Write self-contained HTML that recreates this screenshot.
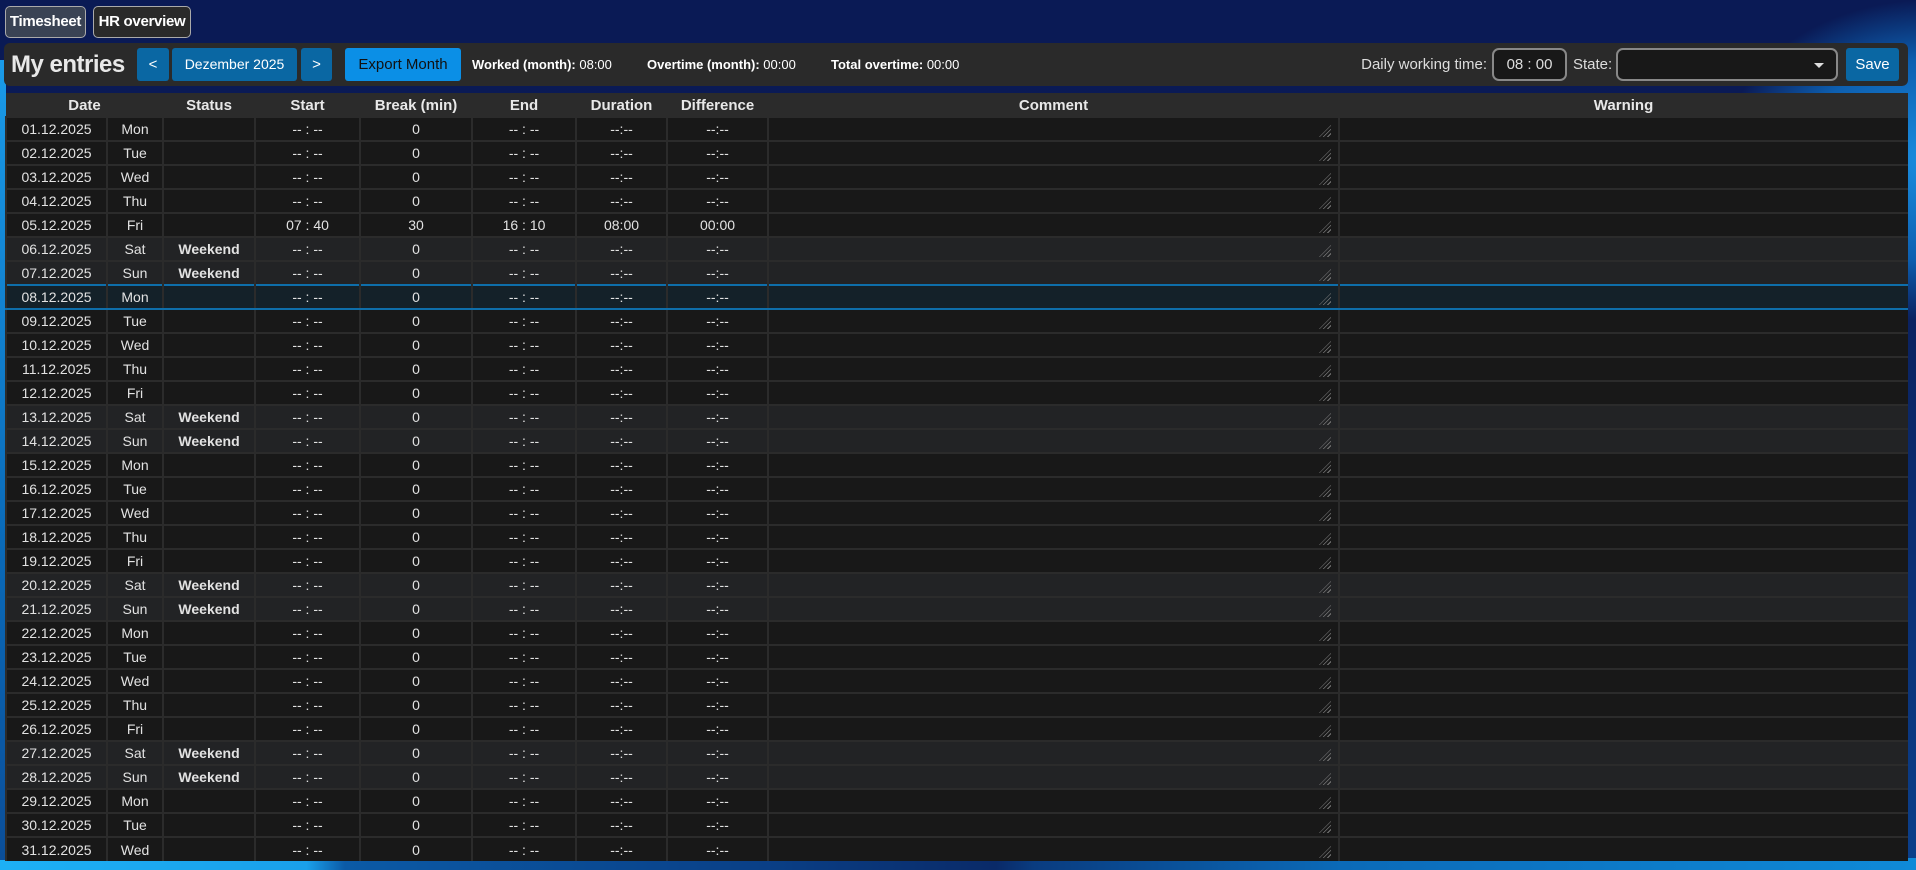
<!DOCTYPE html>
<html><head><meta charset="utf-8"><style>
*{box-sizing:border-box;margin:0;padding:0}
body{width:1916px;height:870px;overflow:hidden;position:relative;font-family:"Liberation Sans",sans-serif;color:#e6e6e6;
background:linear-gradient(90deg,#1db0f5 0,#1aa0ea 16%,#0b5aa6 18%,#0a3f86 40%,#0a2a68 52%,#0a3c80 54%,#0b6ab8 70%,#0f8ad8 100%);
}
.bgtop{position:absolute;left:0;top:0;width:1916px;height:858px;background:
radial-gradient(ellipse 260px 200px at 1930px 160px,#1a8ee0 0,#0d5fb0 50%,rgba(13,40,110,0) 80%),
linear-gradient(180deg,#0a1a55 0,#0b1a55 20%,#0b3f8a 100%);}
.bgleft{position:absolute;left:0;top:60px;width:6px;height:800px;background:linear-gradient(180deg,#1a9be8,#0a6ab8 60%,#0b4e98)}
.tab{position:absolute;top:6px;height:32px;border:1px solid #aaa;border-radius:5px;font-size:15px;font-weight:bold;color:#fff;line-height:30px;text-align:center;letter-spacing:-0.3px}
.bar{position:absolute;left:4px;top:43px;width:1904px;height:43px;background:#2a2a2a;border-radius:6px}
.btn{position:absolute;top:5px;height:33px;border-radius:3px;background:#0a67a3;color:#fff;font-size:15px;line-height:33px;text-align:center}
.lbl{position:absolute;top:0;line-height:43px;font-size:14px;color:#fff;white-space:nowrap}
.tbl{position:absolute;left:5px;top:93px;width:1902px;border-collapse:collapse;table-layout:fixed;font-size:14px}
.tbl th{height:24px;background:#2b2b2b;font-weight:bold;color:#e8e8e8;font-size:15px;padding-top:1px}
.tbl td{height:24px;background:#181818;border-top:2px solid #2b2b2b;border-left:2px solid #2b2b2b;text-align:center;color:#e2e2e2;padding:0;position:relative}
.tbl tr.we td{background:#222325}
.tbl tr.sel td{background:#142129;border-top:2px solid #0e6eaa;border-bottom:2px solid #0e6eaa}
.tbl td.w{font-weight:bold}
.tbl td.c::after{content:"";position:absolute;right:7px;bottom:3px;width:12px;height:12px;background:repeating-linear-gradient(135deg,transparent 0,transparent 2px,#777 2px,#777 3px);clip-path:polygon(100% 0,100% 100%,0 100%)}
</style></head><body>
<div class="bgtop"></div><div class="bgleft"></div>
<div class="tab" style="left:5px;width:81px;background:#3a4354">Timesheet</div>
<div class="tab" style="left:93px;width:98px;background:#2a2a2a">HR overview</div>
<div class="bar">
<div class="lbl" style="left:7px;font-size:24px;font-weight:bold;color:#e8e8e8;letter-spacing:-0.5px">My entries</div>
<div class="btn" style="left:133px;width:32px">&lt;</div>
<div class="btn" style="left:168px;width:125px;font-size:14px">Dezember 2025</div>
<div class="btn" style="left:297px;width:31px">&gt;</div>
<div class="btn" style="left:341px;width:116px;background:#0b8fe6;color:#111;font-size:15px">Export Month</div>
<div class="lbl" style="left:468px;font-size:13px"><b>Worked (month):</b> 08:00</div>
<div class="lbl" style="left:643px;font-size:13px"><b>Overtime (month):</b> 00:00</div>
<div class="lbl" style="left:827px;font-size:13px"><b>Total overtime:</b> 00:00</div>
<div class="lbl" style="right:421px;font-size:15px;color:#ddd">Daily working time:</div>
<div style="position:absolute;left:1488px;top:5px;width:75px;height:33px;border:2px solid #888;border-radius:7px;background:#181818;color:#ddd;font-size:15px;line-height:29px;text-align:center">08 : 00</div>
<div class="lbl" style="left:1569px;font-size:15px;color:#ddd">State:</div>
<div style="position:absolute;left:1612px;top:5px;width:222px;height:33px;border:2px solid #888;border-radius:7px;background:#181818"><div style="position:absolute;right:12px;top:13px;border-left:5px solid transparent;border-right:5px solid transparent;border-top:5px solid #ddd"></div></div>
<div class="btn" style="left:1842px;width:53px;font-size:15px">Save</div>
</div>
<table class="tbl">
<colgroup><col style="width:101px"><col style="width:56px"><col style="width:92px"><col style="width:105px"><col style="width:112px"><col style="width:104px"><col style="width:91px"><col style="width:101px"><col style="width:571px"><col style="width:569px"></colgroup>
<tr><th colspan="2">Date</th><th>Status</th><th>Start</th><th>Break (min)</th><th>End</th><th>Duration</th><th>Difference</th><th>Comment</th><th>Warning</th></tr>
<tr><td>01.12.2025</td><td>Mon</td><td></td><td>-- : --</td><td>0</td><td>-- : --</td><td>--:--</td><td>--:--</td><td class="c"></td><td></td></tr>
<tr><td>02.12.2025</td><td>Tue</td><td></td><td>-- : --</td><td>0</td><td>-- : --</td><td>--:--</td><td>--:--</td><td class="c"></td><td></td></tr>
<tr><td>03.12.2025</td><td>Wed</td><td></td><td>-- : --</td><td>0</td><td>-- : --</td><td>--:--</td><td>--:--</td><td class="c"></td><td></td></tr>
<tr><td>04.12.2025</td><td>Thu</td><td></td><td>-- : --</td><td>0</td><td>-- : --</td><td>--:--</td><td>--:--</td><td class="c"></td><td></td></tr>
<tr><td>05.12.2025</td><td>Fri</td><td></td><td>07 : 40</td><td>30</td><td>16 : 10</td><td>08:00</td><td>00:00</td><td class="c"></td><td></td></tr>
<tr class="we"><td>06.12.2025</td><td>Sat</td><td class="w">Weekend</td><td>-- : --</td><td>0</td><td>-- : --</td><td>--:--</td><td>--:--</td><td class="c"></td><td></td></tr>
<tr class="we"><td>07.12.2025</td><td>Sun</td><td class="w">Weekend</td><td>-- : --</td><td>0</td><td>-- : --</td><td>--:--</td><td>--:--</td><td class="c"></td><td></td></tr>
<tr class="sel"><td>08.12.2025</td><td>Mon</td><td></td><td>-- : --</td><td>0</td><td>-- : --</td><td>--:--</td><td>--:--</td><td class="c"></td><td></td></tr>
<tr><td>09.12.2025</td><td>Tue</td><td></td><td>-- : --</td><td>0</td><td>-- : --</td><td>--:--</td><td>--:--</td><td class="c"></td><td></td></tr>
<tr><td>10.12.2025</td><td>Wed</td><td></td><td>-- : --</td><td>0</td><td>-- : --</td><td>--:--</td><td>--:--</td><td class="c"></td><td></td></tr>
<tr><td>11.12.2025</td><td>Thu</td><td></td><td>-- : --</td><td>0</td><td>-- : --</td><td>--:--</td><td>--:--</td><td class="c"></td><td></td></tr>
<tr><td>12.12.2025</td><td>Fri</td><td></td><td>-- : --</td><td>0</td><td>-- : --</td><td>--:--</td><td>--:--</td><td class="c"></td><td></td></tr>
<tr class="we"><td>13.12.2025</td><td>Sat</td><td class="w">Weekend</td><td>-- : --</td><td>0</td><td>-- : --</td><td>--:--</td><td>--:--</td><td class="c"></td><td></td></tr>
<tr class="we"><td>14.12.2025</td><td>Sun</td><td class="w">Weekend</td><td>-- : --</td><td>0</td><td>-- : --</td><td>--:--</td><td>--:--</td><td class="c"></td><td></td></tr>
<tr><td>15.12.2025</td><td>Mon</td><td></td><td>-- : --</td><td>0</td><td>-- : --</td><td>--:--</td><td>--:--</td><td class="c"></td><td></td></tr>
<tr><td>16.12.2025</td><td>Tue</td><td></td><td>-- : --</td><td>0</td><td>-- : --</td><td>--:--</td><td>--:--</td><td class="c"></td><td></td></tr>
<tr><td>17.12.2025</td><td>Wed</td><td></td><td>-- : --</td><td>0</td><td>-- : --</td><td>--:--</td><td>--:--</td><td class="c"></td><td></td></tr>
<tr><td>18.12.2025</td><td>Thu</td><td></td><td>-- : --</td><td>0</td><td>-- : --</td><td>--:--</td><td>--:--</td><td class="c"></td><td></td></tr>
<tr><td>19.12.2025</td><td>Fri</td><td></td><td>-- : --</td><td>0</td><td>-- : --</td><td>--:--</td><td>--:--</td><td class="c"></td><td></td></tr>
<tr class="we"><td>20.12.2025</td><td>Sat</td><td class="w">Weekend</td><td>-- : --</td><td>0</td><td>-- : --</td><td>--:--</td><td>--:--</td><td class="c"></td><td></td></tr>
<tr class="we"><td>21.12.2025</td><td>Sun</td><td class="w">Weekend</td><td>-- : --</td><td>0</td><td>-- : --</td><td>--:--</td><td>--:--</td><td class="c"></td><td></td></tr>
<tr><td>22.12.2025</td><td>Mon</td><td></td><td>-- : --</td><td>0</td><td>-- : --</td><td>--:--</td><td>--:--</td><td class="c"></td><td></td></tr>
<tr><td>23.12.2025</td><td>Tue</td><td></td><td>-- : --</td><td>0</td><td>-- : --</td><td>--:--</td><td>--:--</td><td class="c"></td><td></td></tr>
<tr><td>24.12.2025</td><td>Wed</td><td></td><td>-- : --</td><td>0</td><td>-- : --</td><td>--:--</td><td>--:--</td><td class="c"></td><td></td></tr>
<tr><td>25.12.2025</td><td>Thu</td><td></td><td>-- : --</td><td>0</td><td>-- : --</td><td>--:--</td><td>--:--</td><td class="c"></td><td></td></tr>
<tr><td>26.12.2025</td><td>Fri</td><td></td><td>-- : --</td><td>0</td><td>-- : --</td><td>--:--</td><td>--:--</td><td class="c"></td><td></td></tr>
<tr class="we"><td>27.12.2025</td><td>Sat</td><td class="w">Weekend</td><td>-- : --</td><td>0</td><td>-- : --</td><td>--:--</td><td>--:--</td><td class="c"></td><td></td></tr>
<tr class="we"><td>28.12.2025</td><td>Sun</td><td class="w">Weekend</td><td>-- : --</td><td>0</td><td>-- : --</td><td>--:--</td><td>--:--</td><td class="c"></td><td></td></tr>
<tr><td>29.12.2025</td><td>Mon</td><td></td><td>-- : --</td><td>0</td><td>-- : --</td><td>--:--</td><td>--:--</td><td class="c"></td><td></td></tr>
<tr><td>30.12.2025</td><td>Tue</td><td></td><td>-- : --</td><td>0</td><td>-- : --</td><td>--:--</td><td>--:--</td><td class="c"></td><td></td></tr>
<tr><td>31.12.2025</td><td>Wed</td><td></td><td>-- : --</td><td>0</td><td>-- : --</td><td>--:--</td><td>--:--</td><td class="c"></td><td></td></tr>
</table>
</body></html>
